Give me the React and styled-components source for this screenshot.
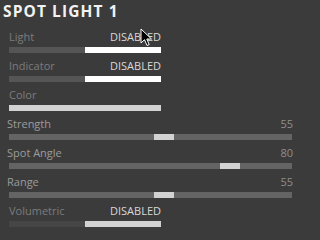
import React from 'react';
import styled, { createGlobalStyle } from 'styled-components';

const GlobalStyle = createGlobalStyle`
  html, body {
    margin: 0;
    padding: 0;
    background: #3b3b3b;
  }
  body {
    font-family: "Open Sans", "Liberation Sans", sans-serif;
  }
`;

const Panel = styled.div`
  position: relative;
  width: 298px;
  height: 233px;
  box-sizing: border-box;
  padding: 0 6px 0 9px;
  background: #3b3b3b;
  overflow: hidden;
`;

const Title = styled.h1`
  margin: 0 0 0 -6px;
  padding-top: 1px;
  font-size: 15.5px;
  line-height: 20px;
  font-weight: 700;
  letter-spacing: 1.1px;
  color: #f2f2f2;
`;

const List = styled.div`
  display: flex;
  flex-direction: column;
  gap: 6px;
  margin-top: 9px;
`;

const Row = styled.div`
  display: flex;
  flex-direction: column;
  gap: 3px;
  width: ${p => (p.$wide ? '283px' : '152px')};
`;

const Head = styled.div`
  display: flex;
  justify-content: space-between;
  align-items: baseline;
  height: 14px;
  margin-left: ${p => (p.$shift ? '-2px' : '0')};
  margin-right: ${p => (p.$shift ? '-1px' : '0')};
`;

const Label = styled.span`
  font-size: 11px;
  line-height: 14px;
  color: ${p => p.$color || '#7c7c7c'};
`;

const State = styled.span`
  font-size: 11px;
  line-height: 14px;
  color: #d8d8d8;
`;

const Value = styled.span`
  font-size: 11px;
  line-height: 14px;
  color: #8e8e8e;
`;

const Toggle = styled.div`
  display: flex;
  height: 6px;
`;

const Half = styled.div`
  flex: 1;
  background: ${p => p.$bg};
`;

const Track = styled.div`
  position: relative;
  height: 6px;
  background: ${p => p.$bg || '#646464'};
`;

const Thumb = styled.div`
  position: absolute;
  top: 0;
  width: 20px;
  height: 6px;
  background: #d2d2d2;
`;

const Cursor = styled.svg`
  position: absolute;
  left: 140px;
  top: 28px;
`;

const toggles = [
  { name: 'Light', off: '#555555', on: '#ffffff' },
  { name: 'Indicator', off: '#555555', on: '#ffffff' },
];

const sliders = [
  { name: 'Strength', value: 55, pos: 145 },
  { name: 'Spot Angle', value: 80, pos: 211 },
  { name: 'Range', value: 55, pos: 145 },
];

const ToggleRow = ({ name, off, on }) => (
  <Row>
    <Head>
      <Label>{name}</Label>
      <State>DISABLED</State>
    </Head>
    <Toggle>
      <Half $bg={off} />
      <Half $bg={on} />
    </Toggle>
  </Row>
);

const App = () => (
  <>
    <GlobalStyle />
    <Panel>
      <Title>SPOT LIGHT 1</Title>
      <List>
        {toggles.map(t => (
          <ToggleRow key={t.name} {...t} />
        ))}
        <Row>
          <Head>
            <Label>Color</Label>
          </Head>
          <Track $bg="#d2d2d2" />
        </Row>
        {sliders.map(s => (
          <Row $wide key={s.name}>
            <Head $shift>
              <Label $color="#9c9c9c">{s.name}</Label>
              <Value>{s.value}</Value>
            </Head>
            <Track>
              <Thumb style={{ left: s.pos }} />
            </Track>
          </Row>
        ))}
        <ToggleRow name="Volumetric" off="#464646" on="#d2d2d2" />
      </List>
      <Cursor width="13" height="19" viewBox="0 0 13 19">
        <path
          d="M1 1 L1 15 L4.5 11.7 L7 17.5 L9.2 16.6 L6.8 11 L11.5 11 Z"
          fill="#000"
          stroke="#fff"
          strokeWidth="1"
          strokeLinejoin="round"
        />
      </Cursor>
    </Panel>
  </>
);

export default App;
